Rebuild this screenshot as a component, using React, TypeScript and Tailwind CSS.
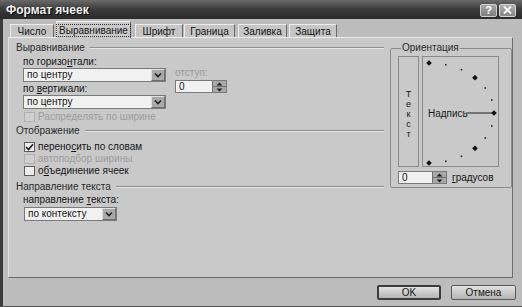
import React from "react";

function Chevron() {
  return (
    <svg width="8" height="6" viewBox="0 0 8 6">
      <path d="M1 1.5 L4 4.5 L7 1.5" stroke="#202020" strokeWidth="1.6" fill="none" />
    </svg>
  );
}

function Select({ value, w }: { value: string; w: string }) {
  return (
    <div className={`${w} h-[14px] flex border border-[#7a7a7a] bg-[#f1f1f1]`}>
      <div className="flex-1 pl-[3px] leading-[12px]">{value}</div>
      <div className="w-[14px] h-full flex items-center justify-center bg-[#a9a9a9] border-[1px] border-t-[#e0e0e0] border-l-[#dcdcdc] border-r-[#6f6f6f] border-b-[#6f6f6f]">
        <Chevron />
      </div>
    </div>
  );
}

function Spin({ value, w }: { value: string; w: string }) {
  return (
    <div className={`${w} h-[13px] flex border border-[#7a7a7a] bg-[#f1f1f1]`}>
      <div className="flex-1 pl-[3px] leading-[11px]">{value}</div>
      <div className="w-[14px] h-full flex flex-col bg-[#a9a9a9] border-l border-[#6f6f6f]">
        <div className="flex-1 flex items-center justify-center border-b border-[#6f6f6f]">
          <svg width="7" height="4" viewBox="0 0 7 4">
            <path d="M0.5 3.5 L3.5 0.5 L6.5 3.5 Z" fill="#202020" />
          </svg>
        </div>
        <div className="flex-1 flex items-center justify-center">
          <svg width="7" height="4" viewBox="0 0 7 4">
            <path d="M0.5 0.5 L3.5 3.5 L6.5 0.5 Z" fill="#202020" />
          </svg>
        </div>
      </div>
    </div>
  );
}

function Check({ checked, disabled, children }: { checked?: boolean; disabled?: boolean; children: React.ReactNode }) {
  return (
    <div className="h-[12px] flex items-center pl-[8px]">
      <div
        className={`w-[11px] h-[10px] border flex items-center justify-center ${
          disabled ? "border-[#b0b0b0] bg-[#cfcfcf]" : "border-[#5e5e5e] bg-[#ededed]"
        }`}
      >
        {checked && (
          <svg width="9" height="8" viewBox="0 0 9 8">
            <path d="M1 4 L3.5 6.5 L8 1.2" stroke="#1a1a1a" strokeWidth="1.6" fill="none" />
          </svg>
        )}
      </div>
      <span className={`ml-[3px] leading-[12px] ${disabled ? "text-[#9c9c9c]" : ""}`}>{children}</span>
    </div>
  );
}

function GroupLabel({ children }: { children: React.ReactNode }) {
  return (
    <div className="h-[12px] flex items-center">
      <span className="leading-[12px] text-[#2a2a2a]">{children}</span>
      <div className="flex-1 ml-[5px] h-[2px] border-t border-[#8e8e8e] border-b border-b-[#e6e6e6]" />
    </div>
  );
}

function Dial() {
  const pts: { x: number; y: number; big: boolean }[] = [];
  for (let i = 0; i <= 12; i++) {
    const a = ((90 - i * 15) * Math.PI) / 180;
    pts.push({ x: 6 + 65 * Math.cos(a), y: 56 - 50 * Math.sin(a), big: i % 3 === 0 });
  }
  return (
    <svg width="76" height="109" viewBox="0 0 76 109">
      {pts.map((p, i) =>
        p.big ? (
          <path key={i} d={`M${p.x} ${p.y - 2.8} L${p.x + 2.8} ${p.y} L${p.x} ${p.y + 2.8} L${p.x - 2.8} ${p.y} Z`} fill="#111" />
        ) : (
          <rect key={i} x={p.x - 0.8} y={p.y - 0.8} width="1.6" height="1.6" fill="#222" />
        )
      )}
      <text x="5" y="59.5" fontSize="10" fontFamily="Liberation Sans, sans-serif" fill="#1a1a1a">
        Надпись
      </text>
      <line x1="43" y1="56" x2="69" y2="56" stroke="#222" strokeWidth="1" />
    </svg>
  );
}

function Tab({ label, w, active }: { label: string; w: string; active?: boolean }) {
  if (active) {
    return (
      <div className={`${w} h-[17px] -mb-[1px] relative z-10 bg-[#c9c9c9] border border-b-0 border-t-[#efefef] border-l-[#efefef] border-r-[#6a6a6a] flex items-center justify-center`}>
        <span className="leading-[11px] px-[2px] border border-dotted border-[#333]">{label}</span>
      </div>
    );
  }
  return (
    <div className={`${w} h-[13px] bg-[#c6c6c6] border border-b-0 border-t-[#ececec] border-l-[#ececec] border-r-[#6a6a6a] flex items-center justify-center`}>
      <span className="leading-[11px]">{label}</span>
    </div>
  );
}

export default function App() {
  return (
    <div className="w-[522px] h-[307px] flex flex-col bg-[#bcbcbc] font-['Liberation_Sans',sans-serif] text-[10px] text-[#151515] overflow-hidden">
      {/* title bar */}
      <div className="h-[19px] flex items-center bg-gradient-to-b from-[#6a6a6a] via-[#3a3a3a] to-[#2a2a2a] pl-[6px] pr-[6px]">
        <span className="text-[12px] font-bold text-[#f2f2f2] [text-shadow:1px_1px_0_#000] leading-[14px]">Формат ячеек</span>
        <div className="flex-1" />
        <div className="w-[17px] h-[13px] mt-[1px] rounded-[2px] bg-gradient-to-b from-[#a8a8a8] to-[#7c7c7c] border border-[#cfcfcf] flex items-center justify-center text-white font-bold text-[11px] leading-[11px]">
          ?
        </div>
        <div className="w-[17px] h-[13px] mt-[1px] ml-[2px] rounded-[2px] bg-gradient-to-b from-[#b0b0b0] to-[#888] border border-[#d6d6d6] flex items-center justify-center">
          <svg width="9" height="8" viewBox="0 0 9 8">
            <path d="M1 0.5 L8 7.5 M8 0.5 L1 7.5" stroke="#fff" strokeWidth="1.8" />
          </svg>
        </div>
      </div>

      {/* body */}
      <div className="flex-1 flex flex-col border-l-[3px] border-[#3c3c3c] border-b-[1px] border-b-[#555]">
        {/* tabs */}
        <div className="h-[18px] flex items-end pl-[7px]">
          <Tab label="Число" w="w-[44px]" />
          <div className="w-[2px]" />
          <Tab label="Выравнивание" w="w-[75px]" active />
          <div className="w-[4px]" />
          <Tab label="Шрифт" w="w-[48px]" />
          <div className="w-[1px]" />
          <Tab label="Граница" w="w-[51px]" />
          <div className="w-[3px]" />
          <Tab label="Заливка" w="w-[49px]" />
          <div className="w-[2px]" />
          <Tab label="Защита" w="w-[48px]" />
        </div>

        {/* panel */}
        <div className="ml-[5px] w-[505px] h-[241px] bg-[#c9c9c9] border border-t-[#ededed] border-l-[#e2e2e2] border-r-[#6c6c6c] border-b-[#6c6c6c] flex">
          {/* left column */}
          <div className="w-[381px] pl-[7px] pr-[6px] pt-[4px] flex flex-col">
            <GroupLabel>Выравнивание</GroupLabel>
            <div className="flex">
              <div className="flex flex-col pl-[7px]">
                <div className="h-[12px] mt-[2px] leading-[12px]">
                  по горизо<u>н</u>тали:
                </div>
                <Select value="по центру" w="w-[143px]" />
                <div className="h-[12px] mt-[1px] leading-[12px]">
                  по <u>в</u>ертикали:
                </div>
                <Select value="по центру" w="w-[143px]" />
              </div>
              <div className="flex flex-col ml-[9px] pt-[13px]">
                <div className="h-[12px] leading-[12px] text-[#9a9a9a]">отступ:</div>
                <div className="mt-[1px]">
                  <Spin value="0" w="w-[52px]" />
                </div>
              </div>
            </div>
            <div className="mt-[2px]">
              <Check disabled>Распределять по ширине</Check>
            </div>
            <div className="mt-[2px]">
              <GroupLabel>Отображение</GroupLabel>
            </div>
            <div className="mt-[4px]">
              <Check checked>
                перено<u>с</u>ить по словам
              </Check>
            </div>
            <Check disabled>автоподбор ширины</Check>
            <Check>
              о<u>б</u>ъединение ячеек
            </Check>
            <div className="mt-[4px]">
              <GroupLabel>Направление текста</GroupLabel>
            </div>
            <div className="h-[12px] mt-[1px] pl-[7px] leading-[12px]">
              направление <u>т</u>екста:
            </div>
            <div className="mt-[1px] pl-[8px]">
              <Select value="по контексту" w="w-[93px]" />
            </div>
          </div>

          {/* orientation */}
          <div className="pt-[4px]">
            <fieldset className="w-[122px] h-[146px] border border-[#8c8c8c] rounded-[2px] pl-[7px] pt-[2px]">
              <legend className="ml-[3px] px-[1px] leading-[12px] text-[#2a2a2a]">Ориентация</legend>
              <div className="flex">
                <div className="w-[21px] h-[111px] border border-[#8a8a8a] flex flex-col items-center justify-center text-[9px] leading-[10px] pt-[4px]">
                  <span>Т</span>
                  <span>е</span>
                  <span>к</span>
                  <span>с</span>
                  <span>т</span>
                </div>
                <div className="ml-[3px] w-[77px] h-[111px] border border-[#8a8a8a]">
                  <Dial />
                </div>
              </div>
              <div className="flex items-center mt-[4px]">
                <Spin value="0" w="w-[49px]" />
                <span className="ml-[5px] leading-[12px]">
                  <u>г</u>радусов
                </span>
              </div>
            </fieldset>
          </div>
        </div>

        {/* buttons */}
        <div className="flex justify-end pr-[6px] mt-[7px]">
          <div className="w-[64px] h-[15px] rounded-[2px] border-2 border-[#3c3c3c] bg-gradient-to-b from-[#e2e2e2] to-[#b4b4b4] flex items-center justify-center leading-[11px]">
            OK
          </div>
          <div className="ml-[10px] w-[65px] h-[15px] rounded-[2px] border border-[#5a5a5a] bg-gradient-to-b from-[#e2e2e2] to-[#b4b4b4] flex items-center justify-center leading-[11px]">
            Отмена
          </div>
        </div>
      </div>
    </div>
  );
}
